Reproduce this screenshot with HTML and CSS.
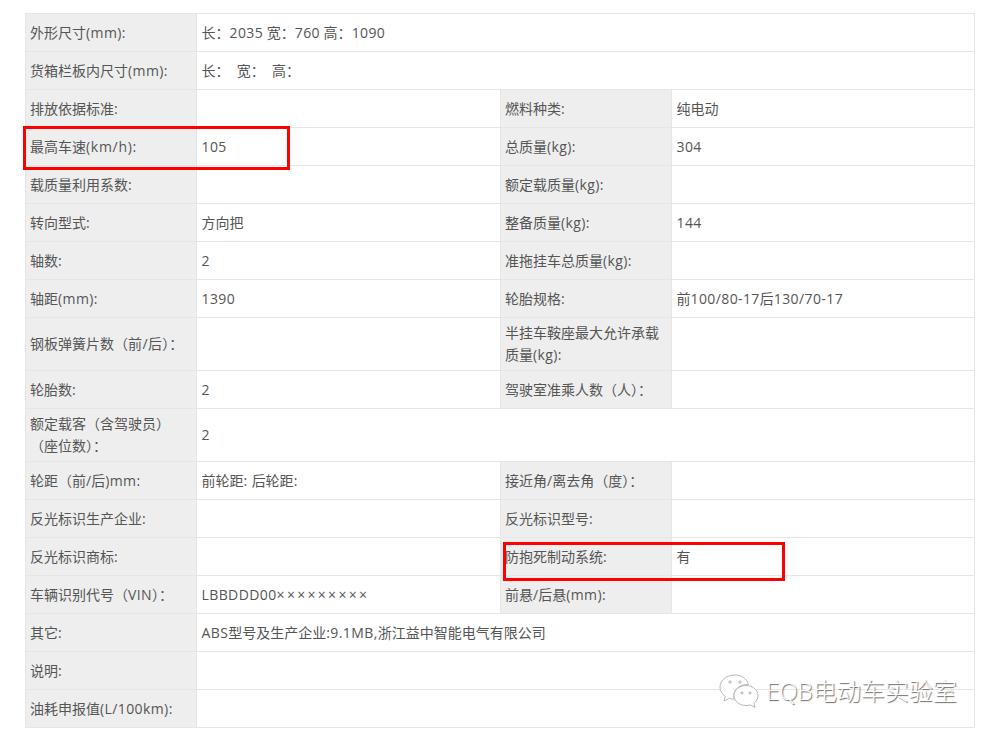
FILE: index.html
```html
<!DOCTYPE html>
<html lang="zh-CN">
<head>
<meta charset="utf-8">
<title>参数表</title>
<link rel="stylesheet" href="styles.css">
</head>
<body>
<main class="page">
<table class="spec">
<colgroup><col class="c1"><col class="c2"><col class="c3"><col class="c4"></colgroup>
<tbody>
<tr><th>外形尺寸<span class="lat">(mm):</span></th><td colspan="3">长：<span class="lat">2035</span> 宽：<span class="lat">760</span> 高：<span class="lat">1090</span></td></tr>
<tr><th>货箱栏板内尺寸<span class="lat">(mm):</span></th><td colspan="3">长：&nbsp;&nbsp;宽：&nbsp;&nbsp;高：</td></tr>
<tr><th>排放依据标准<span class="lat">:</span></th><td></td><th>燃料种类<span class="lat">:</span></th><td>纯电动</td></tr>
<tr><th>最高车速<span class="lat wide">(km/h):</span></th><td><span class="lat">105</span></td><th>总质量<span class="lat">(kg):</span></th><td><span class="lat">304</span></td></tr>
<tr><th>载质量利用系数<span class="lat">:</span></th><td></td><th>额定载质量<span class="lat">(kg):</span></th><td></td></tr>
<tr><th>转向型式<span class="lat">:</span></th><td>方向把</td><th>整备质量<span class="lat">(kg):</span></th><td><span class="lat">144</span></td></tr>
<tr><th>轴数<span class="lat">:</span></th><td><span class="lat">2</span></td><th>准拖挂车总质量<span class="lat">(kg):</span></th><td></td></tr>
<tr><th>轴距<span class="lat">(mm):</span></th><td><span class="lat">1390</span></td><th>轮胎规格<span class="lat">:</span></th><td>前<span class="lat">100/80-17</span>后<span class="lat">130/70-17</span></td></tr>
<tr><th>钢板弹簧片数（<span class="lat">前/后</span>）<span class="fw">：</span></th><td></td><th>半挂车鞍座最大允许承载质量<span class="lat">(kg):</span></th><td></td></tr>
<tr><th>轮胎数<span class="lat">:</span></th><td><span class="lat">2</span></td><th>驾驶室准乘人数（人）<span class="fw">：</span></th><td></td></tr>
<tr><th>额定载客（含驾驶员）（座位数）<span class="fw">：</span></th><td colspan="3"><span class="lat">2</span></td></tr>
<tr><th>轮距（前/后<span class="lat">)mm:</span></th><td>前轮距<span class="lat">: </span>后轮距<span class="lat">:</span></td><th>接近角/离去角（度）<span class="fw">：</span></th><td></td></tr>
<tr><th>反光标识生产企业<span class="lat">:</span></th><td></td><th>反光标识型号<span class="lat">:</span></th><td></td></tr>
<tr><th>反光标识商标<span class="lat">:</span></th><td></td><th>防抱死制动系统<span class="lat">:</span></th><td>有</td></tr>
<tr><th>车辆识别代号（<span class="lat">VIN</span>）<span class="fw">：</span></th><td><span class="lat">LBBDDD00</span><span class="times">×××××××××</span></td><th>前悬/后悬<span class="lat">(mm):</span></th><td></td></tr>
<tr><th>其它<span class="lat">:</span></th><td colspan="3"><span class="lat">ABS</span>型号及生产企业<span class="lat">:9.1MB,</span>浙江益中智能电气有限公司</td></tr>
<tr><th>说明<span class="lat">:</span></th><td colspan="3"></td></tr>
<tr><th>油耗申报值<span class="lat">(L/100km):</span></th><td colspan="3"></td></tr>
</tbody>
</table>
<div class="mark mark-speed"></div>
<div class="mark mark-abs"></div>
<div class="watermark">
<svg class="wechat" viewBox="0 0 40 34" width="40" height="34" fill="#fff" stroke="#999" stroke-width="0.7">
<path d="M16 1C7.500 1 1 6.300 1 13c0 3.700 2 7 5.200 9.300L5 27l5.200-2.600c1.700.5 3.400.8 5.200.8-.4-1.100-.6-2.300-.6-3.500 0-6.200 6-11.200 13.600-11.200h1C28.200 5 22.700 1 16 1z"/>
<path d="M39 21.500c0-5.500-5.400-10-12-10s-12 4.500-12 10 5.400 10 12 10c1.500 0 2.900-.2 4.200-.6L36 33.500l-1.200-4.100c2.600-1.800 4.200-4.700 4.200-7.900z"/>
<circle cx="11" cy="8" r="1.200"/><circle cx="21" cy="8" r="1.200"/><circle cx="23" cy="19" r="1.100"/><circle cx="31" cy="19" r="1.100"/>
</svg>
<span class="wm-text">EQB电动车实验室</span>
</div>
</main>
</body>
</html>
```
FILE: styles.css
```css
html, body { margin: 0; padding: 0; background: #fff; }
.page {
  position: relative;
  width: 990px;
  height: 736px;
  overflow: hidden;
  padding: 13px 0 0 25px;
  box-sizing: border-box;
  font-family: "Open Sans", "Noto Sans CJK SC", sans-serif;
  font-size: 14px;
  color: #555;
}
.spec {
  border-collapse: collapse;
  table-layout: fixed;
  width: 949px;
}
.c1 { width: 171px; }
.c2 { width: 304px; }
.c3 { width: 171px; }
.c4 { width: 303px; }
.spec th, .spec td {
  border: 1px solid #e6e6e6;
  padding: 4px 10px 4px 4px;
  box-sizing: border-box;
  height: 38px;
  line-height: 22px;
  font-weight: 400;
  text-align: left;
  vertical-align: middle;
}
.spec td { padding-left: 4.5px; }
.spec th { background: #eee; }
.lat { letter-spacing: 0.4px; }
.lat.wide { letter-spacing: 0.7px; }
.fw { font-family: "Noto Sans CJK TC", sans-serif; line-height: 1; }
.times { letter-spacing: 2.3px; }
.mark {
  position: absolute;
  border: 3px solid #f00;
  box-sizing: border-box;
}
.mark-speed { left: 23px; top: 126px; width: 267px; height: 44px; }
.mark-abs { left: 503px; top: 542px; width: 282px; height: 39px; }
.watermark {
  position: absolute;
  left: 719px;
  top: 674px;
  display: flex;
  align-items: center;
  gap: 7px;
}
.wechat { display: block; }
.wm-text {
  font-family: "Open Sans", "Noto Sans CJK SC", sans-serif;
  font-size: 24px;
  font-weight: 300;
  line-height: 34px;
  color: #fff;
  text-shadow: 1px 1px 1px #666;
  white-space: nowrap;
}
```
